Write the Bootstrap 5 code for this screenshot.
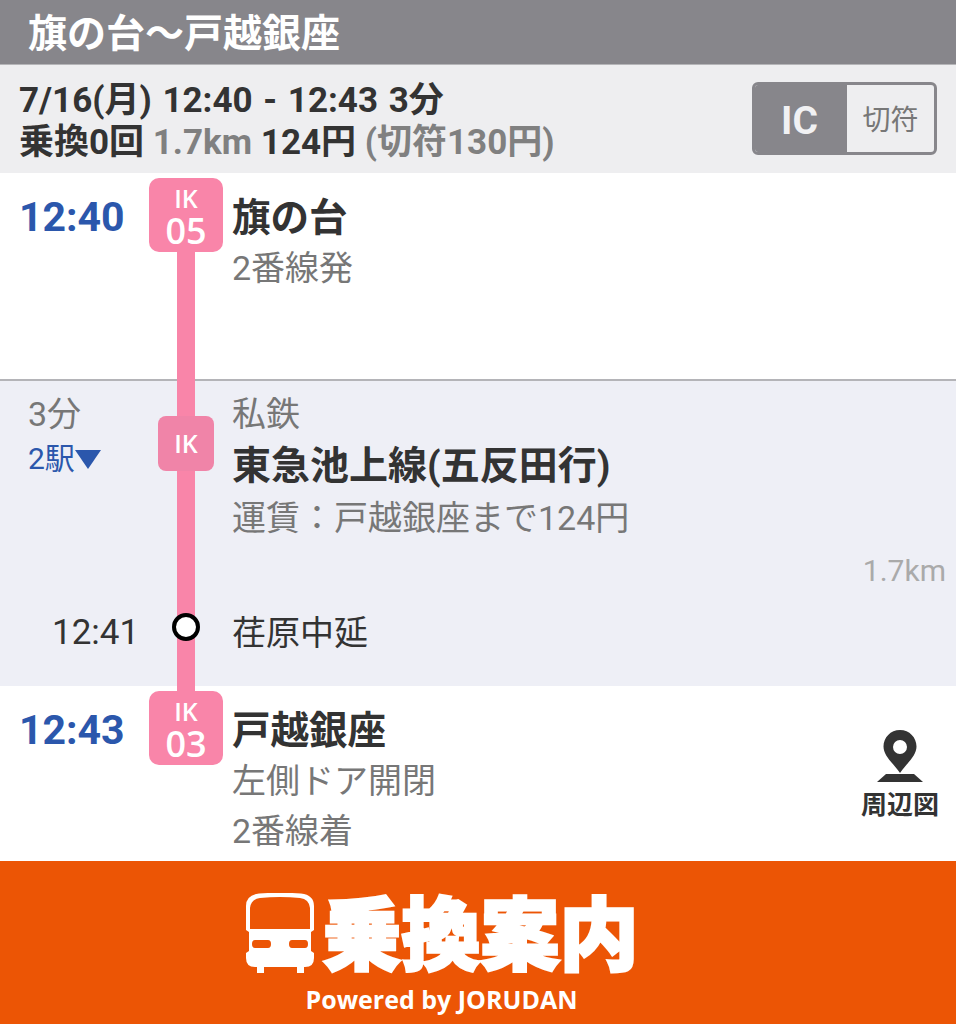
<!DOCTYPE html>
<html lang="ja">
  <head>
    <meta charset="utf-8">
    <meta name="viewport" content="width=device-width, initial-scale=1">
    <title>旗の台～戸越銀座</title>
    <link href="https://cdn.jsdelivr.net/npm/bootstrap@5.3.3/dist/css/bootstrap.min.css" rel="stylesheet">
    <style>
      body { font-family: Roboto, "Noto Sans CJK JP", sans-serif; background: #fff; color: #333; width: 956px; height: 1024px; overflow: hidden; }
      .route-title { height: 65px; background: #87868b; border-bottom: 1px solid #b5b5b8; color: #fff; font-size: 39px; font-weight: 700; padding-left: 28px; line-height: 69px; }
      .summary { height: 108px; background: #eeeef0; padding: 15px 19px 0 19px; }
      .summary-text { font-size: 35px; font-weight: 700; line-height: 42px; }
      .first-line { word-spacing: 2px; }
      .muted { color: #808080; }
      .fare-toggle { width: 185px; height: 73px; margin: 2px 0 0 0; border: 3px solid #87868b; border-radius: 6px; }
      .fare-ic { width: 92px; background: #87868b; color: #f1f1f3; font-size: 39px; font-weight: 700; padding: 5px 3px 0 0; }
      .fare-ticket { color: #777; font-size: 28px; padding-top: 5px; }
      .time-col { width: 149px; flex: none; }
      .line-col { width: 74px; flex: none; }
      .info-col { padding-left: 9px; min-width: 0; }
      .stop-row { background: #fff; }
      .stop-depart { height: 206px; padding-top: 5px; }
      .stop-arrive { height: 175px; }
      .train-row { height: 307px; background: #eeeff6; border-top: 2px solid #b4b4b8; }
      .main-time { color: #2b57ac; font-size: 41px; font-weight: 700; padding: 17px 0 0 19px; line-height: 44px; }
      .stop-arrive .main-time { padding-top: 22px; }
      .stripe { width: 18px; background: #f985a9; }
      .stripe-top { height: 37px; flex: none; margin-top: -2px; }
      .stripe-join { height: 5px; flex: none; }
      .stn-badge { width: 74px; height: 74px; flex: none; border-radius: 10px; background: #f985a9; color: #fff; text-align: center; font-family: "Open Sans", sans-serif; font-weight: 600; }
      .stn-badge .code { font-size: 25px; line-height: 24px; padding-top: 8px; }
      .stn-badge .num { font-size: 36px; line-height: 36px; padding-top: 3px; }
      .line-badge { width: 56px; height: 55px; flex: none; border-radius: 8px; background: #f084a8; color: #fff; font-family: "Open Sans", sans-serif; font-size: 25px; font-weight: 600; }
      .stn-name { font-size: 38.500px; font-weight: 700; line-height: 44px; padding-top: 18px; }
      .stop-arrive .stn-name { padding-top: 23px; }
      .note { color: #777; font-size: 34px; line-height: 50px; }
      .note-first { margin-top: 3px; }
      .train-name { font-size: 39px; padding-top: 5px; }
      .fare-note { margin-top: 5px; }
      .elapsed { font-size: 34px; color: #777; line-height: 40px; padding: 13px 0 0 28px; }
      .stops-toggle { font-size: 30px; color: #2b57ac; line-height: 40px; padding-left: 28px; margin-top: 5px; }
      .tri { width: 26px; height: 19px; fill: #2b57ac; }
      .dot { width: 28px; height: 28px; border-radius: 50%; background: #fff; border: 4px solid #000; top: 232px; left: 23px; }
      .km { font-size: 30px; color: #aaa; line-height: 36px; padding-right: 10px; margin-top: 10px; }
      .via-text { font-size: 34px; line-height: 40px; padding-bottom: 33px; }
      .via-time { font-size: 35px; padding-left: 52px; }
      .map-link { top: 44px; right: 17px; width: 78px; font-size: 26px; font-weight: 700; line-height: 30px; }
      .map-link svg { margin-bottom: 8px; }
      .footer-bar { height: 163px; background: #ec5505; color: #fff; padding: 32px 73px 0 0; }
      .logo-word { font-family: "Noto Sans CJK JP", sans-serif; font-weight: 900; font-size: 79px; line-height: 80px; margin-top: -7px; -webkit-text-stroke: 3px #fff; }
      .powered { font-family: "Open Sans", sans-serif; font-size: 25px; font-weight: 700; line-height: 28px; margin-top: 12px; }
    </style>
  </head>
  <body>
    <div class="route-title">旗の台～戸越銀座</div>

    <!-- Summary and IC / ticket toggle -->
    <div class="summary d-flex justify-content-between">
      <div class="summary-text">
        <div class="first-line">7/16(月) 12:40 - 12:43 3分</div>
        <div>乗換0回 <span class="muted">1.7km</span> 124円 <span class="muted">(切符130円)</span></div>
      </div>
      <div class="fare-toggle d-flex overflow-hidden">
        <div class="fare-ic d-flex align-items-center justify-content-center">IC</div>
        <div class="fare-ticket flex-grow-1 d-flex align-items-center justify-content-center">切符</div>
      </div>
    </div>

    <!-- Departure -->
    <div class="stop-row stop-depart d-flex">
      <div class="time-col main-time">12:40</div>
      <div class="line-col d-flex flex-column align-items-center">
        <div class="stn-badge">
          <div class="code">IK</div>
          <div class="num">05</div>
        </div>
        <div class="stripe flex-grow-1"></div>
      </div>
      <div class="info-col">
        <div class="stn-name">旗の台</div>
        <div class="note note-first">2番線発</div>
      </div>
    </div>

    <!-- Train -->
    <div class="train-row d-flex">
      <div class="time-col d-flex flex-column">
        <div class="elapsed">3分</div>
        <div class="stops-toggle d-flex align-items-center">2駅<svg class="tri" viewBox="0 0 26 19"><path d="M0 0H26L13 19Z"/></svg></div>
        <div class="via-text via-time mt-auto">12:41</div>
      </div>
      <div class="line-col d-flex flex-column align-items-center position-relative">
        <div class="stripe stripe-top"></div>
        <div class="line-badge d-flex align-items-center justify-content-center">IK</div>
        <div class="stripe flex-grow-1"></div>
        <div class="dot position-absolute"></div>
      </div>
      <div class="info-col flex-grow-1 d-flex flex-column">
        <div class="note pt-2">私鉄</div>
        <div class="stn-name train-name">東急池上線(五反田行)</div>
        <div class="note fare-note">運賃：戸越銀座まで124円</div>
        <div class="km text-end">1.7km</div>
        <div class="via-text mt-auto">荏原中延</div>
      </div>
    </div>

    <!-- Arrival -->
    <div class="stop-row stop-arrive d-flex position-relative">
      <div class="time-col main-time">12:43</div>
      <div class="line-col d-flex flex-column align-items-center">
        <div class="stripe stripe-join"></div>
        <div class="stn-badge">
          <div class="code">IK</div>
          <div class="num">03</div>
        </div>
      </div>
      <div class="info-col">
        <div class="stn-name">戸越銀座</div>
        <div class="note note-first">左側ドア開閉</div>
        <div class="note">2番線着</div>
      </div>
      <div class="map-link position-absolute text-center">
        <svg width="46" height="52" viewBox="0 0 46 52" class="d-block mx-auto"><path fill="#333" fill-rule="evenodd" d="M23 0C13.500 0 6.500 7.500 6.500 16.500C6.500 26 16 33 23 43C30 33 39.500 26 39.500 16.500C39.500 7.500 32.500 0 23 0ZM23 10A7 7 0 1 1 23 24A7 7 0 1 1 23 10Z"/><path fill="#333" d="M9 44H37L46 52H0Z"/></svg>
        周辺図
      </div>
    </div>

    <!-- Logo footer -->
    <div class="footer-bar d-flex flex-column align-items-center">
      <div class="d-flex align-items-center gap-2">
        <svg width="70" height="80" viewBox="0 0 70 80"><path fill="#fff" fill-rule="evenodd" d="M14 .5Q35 -1 56 .5Q69 2 69 13V37L66 39V58L69 60V65Q69 74 60 74H59V80H52V74H19V80H12V74H10Q1 74 1 65V60L4 58V39L1 37V13Q1 2 14 .5ZM15 5Q6 6 5 15V36H65V15Q64 6 55 5Q35 3 15 5ZM10 47Q7 47 7 51Q7 55 10 55H23Q26 55 26 51Q26 47 23 47ZM47 47Q44 47 44 51Q44 55 47 55H60Q63 55 63 51Q63 47 60 47Z"/></svg>
        <div class="logo-word">乗換案内</div>
      </div>
      <div class="powered">Powered by JORUDAN</div>
    </div>
  </body>
</html>
